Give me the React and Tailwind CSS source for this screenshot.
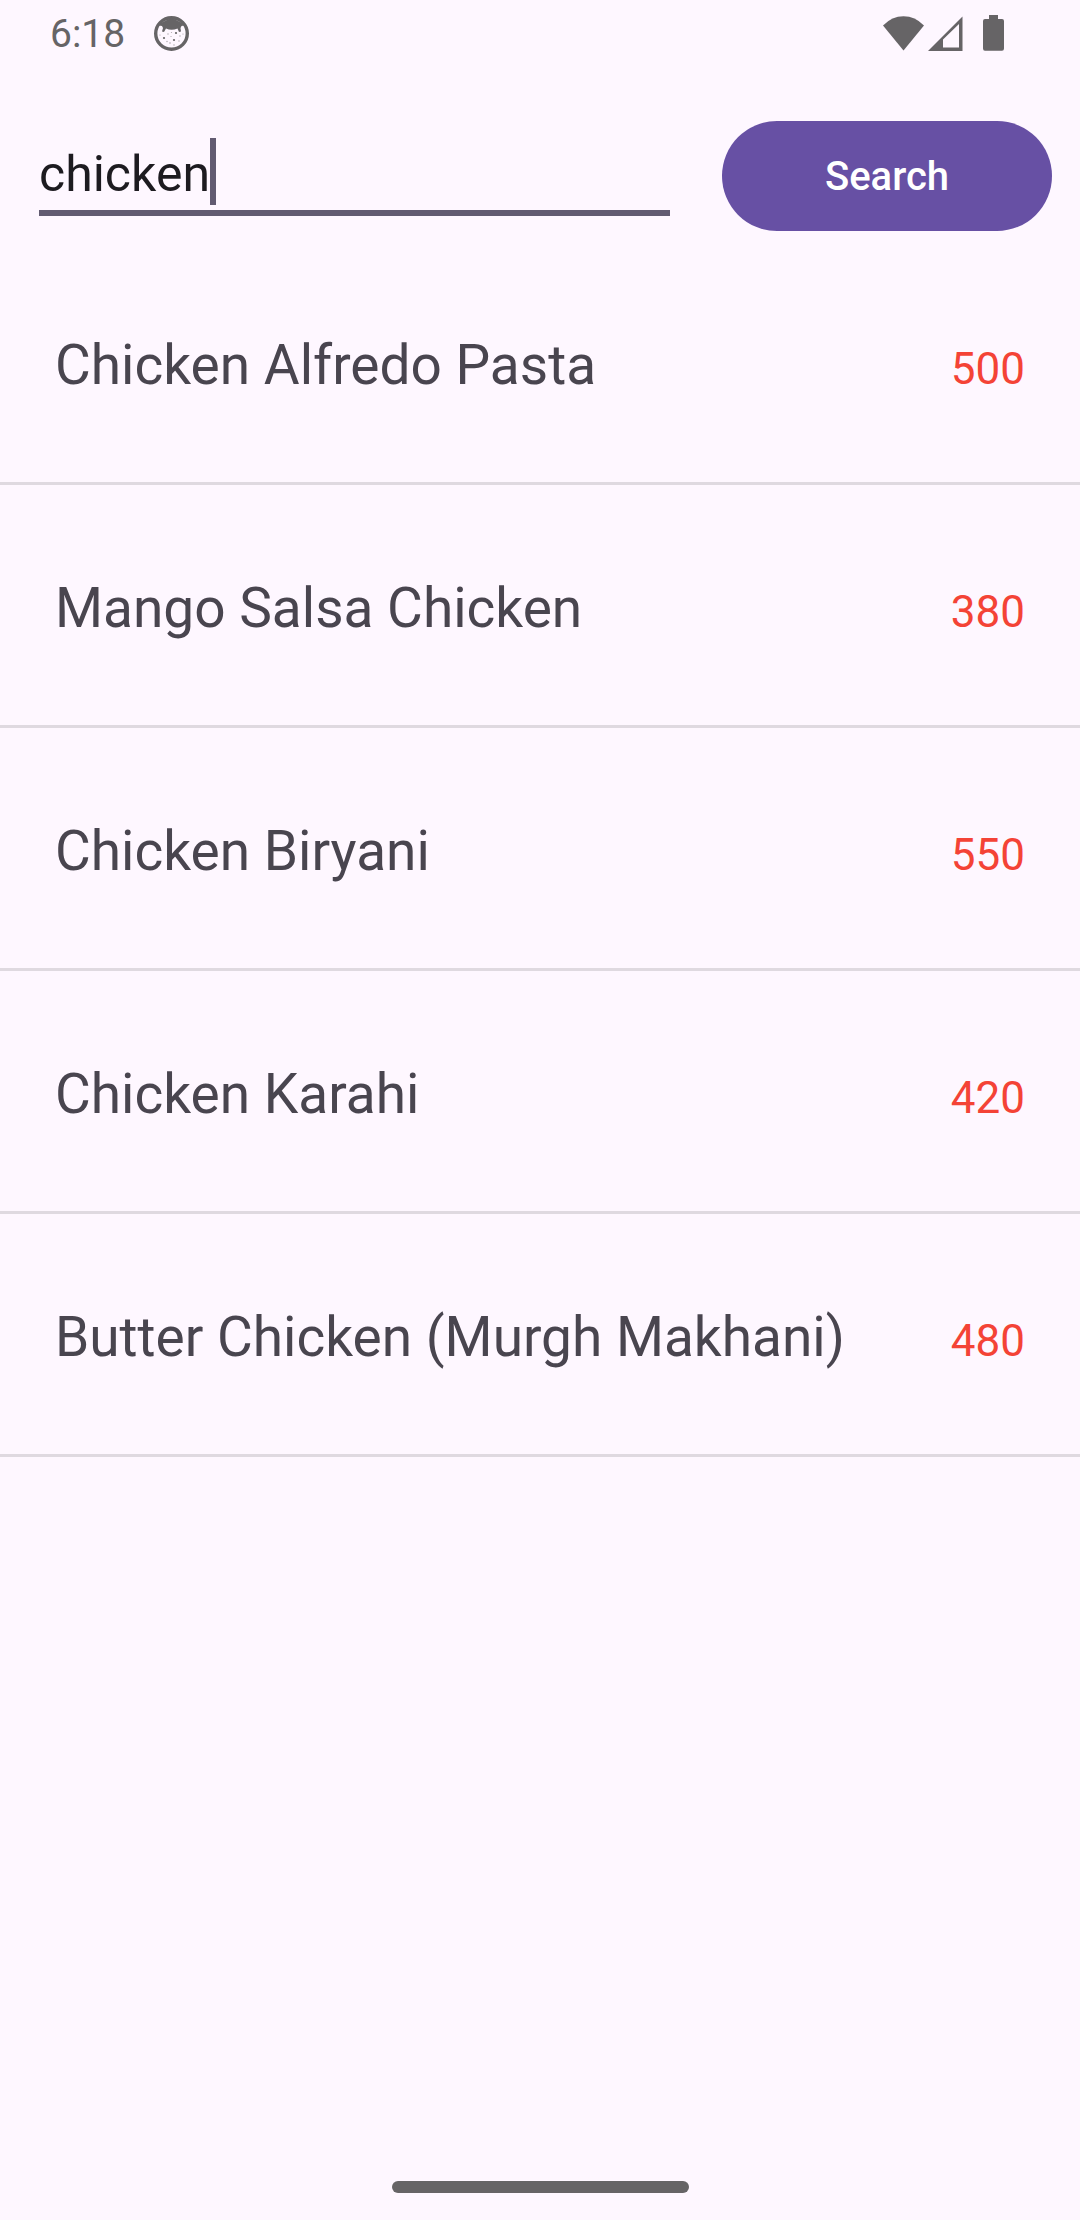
import { useState } from "react";

const recipes = [
  { name: "Chicken Alfredo Pasta", calories: 500 },
  { name: "Mango Salsa Chicken", calories: 380 },
  { name: "Chicken Biryani", calories: 550 },
  { name: "Chicken Karahi", calories: 420 },
  { name: "Butter Chicken (Murgh Makhani)", calories: 480 },
];

function FaceIcon() {
  return (
    <svg viewBox="0 0 35 35" className="size-[35px]" aria-hidden="true">
      <circle cx="17.5" cy="17.5" r="15.8" fill="none" stroke="currentColor" strokeWidth="3.4" />
      <path
        d="M7 7 L17.5 1.5 L28 7 L30 9.5 L27.5 10 L26.5 12 L27 15.5 L25 16 L23.5 12.5 Q17.5 15 12 12.5 L10 16 L8 15.5 L9 12 L8 10 L5 9.5 Z"
        fill="currentColor"
      />
      <g fill="currentColor">
        <circle cx="22" cy="17" r="1.1" />
        <circle cx="10" cy="22" r="1.1" />
        <circle cx="20" cy="24" r="1.1" />
        <g opacity="0.55">
          <circle cx="14" cy="18" r="0.7" />
          <circle cx="17.5" cy="16.5" r="0.6" />
          <circle cx="6" cy="19" r="0.6" />
          <circle cx="17" cy="20.5" r="0.6" />
          <circle cx="26" cy="20" r="0.7" />
          <circle cx="13" cy="25.5" r="0.7" />
          <circle cx="16" cy="27" r="0.8" />
          <circle cx="25" cy="25" r="0.7" />
          <circle cx="20" cy="29" r="0.7" />
          <circle cx="29" cy="18" r="0.6" />
        </g>
      </g>
    </svg>
  );
}

function WifiIcon() {
  return (
    <svg viewBox="0 0 41 35" className="h-[35px] w-[41px]" aria-hidden="true">
      <path d="M0 9.5 Q9 0.3 20.5 0.3 T41 9.5 L20.5 34.5 Z" fill="currentColor" />
    </svg>
  );
}

function SignalIcon() {
  return (
    <svg viewBox="0 0 35 35" className="size-[35px]" aria-hidden="true">
      <path d="M0 35 L34.5 0.5 V35 Z M15 23.5 V31.5 H31 V8 Z" fill="currentColor" fillRule="evenodd" />
    </svg>
  );
}

function BatteryIcon() {
  return (
    <svg viewBox="0 0 21 36" className="h-[36px] w-[21px]" aria-hidden="true">
      <path
        d="M6 0 H15 V4 H19 Q21 4 21 6 V33.5 Q21 35.7 19 35.7 H2 Q0 35.7 0 33.5 V6 Q0 4 2 4 H6 Z"
        fill="currentColor"
      />
    </svg>
  );
}

export default function App() {
  const [query, setQuery] = useState("chicken");

  return (
    <div className="flex min-h-screen flex-col bg-[#fef7ff] font-[Roboto,sans-serif]">
      <div className="flex h-[66px] items-center justify-between pr-[76px] pl-[50px] text-[#666466]">
        <div className="flex items-center gap-[29px]">
          <span className="pt-[2px] text-[39px] leading-[64px]">6:18</span>
          <FaceIcon />
        </div>
        <div className="flex items-center">
          <WifiIcon />
          <span className="ml-1">
            <SignalIcon />
          </span>
          <span className="ml-5">
            <BatteryIcon />
          </span>
        </div>
      </div>

      <form
        className="flex items-end gap-[52px] pt-[55px] pr-7 pb-[11px] pl-[39px]"
        onSubmit={(event) => event.preventDefault()}
      >
        <label className="mb-[15px] flex min-w-0 flex-1 items-center border-b-[6px] border-[#625b71] pb-[5px]">
          <input
            type="text"
            aria-label="Search recipes"
            value={query}
            onChange={(event) => setQuery(event.target.value)}
            className="field-sizing-content h-[67px] max-w-full bg-transparent pt-[5px] text-[50px] leading-[62px] text-[#1d1b20] caret-transparent outline-none"
          />
          <span className="h-[67px] w-[6px] shrink-0 bg-[#625b71]" aria-hidden="true" />
        </label>
        <button
          type="submit"
          className="h-[110px] w-[330px] shrink-0 rounded-full bg-[#6750a4] pt-[2px] text-[40px] font-medium text-white"
        >
          Search
        </button>
      </form>

      <ul className="flex-1">
        {recipes.map((recipe) => (
          <li
            key={recipe.name}
            className="flex items-baseline justify-between border-b-3 border-[#dfd9e0] px-[55px] pt-[91px] pb-[85px]"
          >
            <span className="text-[55px] leading-[64px] text-[#49454f]">{recipe.name}</span>
            <span className="text-[44px] leading-[52px] text-[#f44336]">{recipe.calories}</span>
          </li>
        ))}
      </ul>

      <div className="flex justify-center pb-[27px]">
        <div className="h-3 w-[297px] rounded-full bg-[#666466]" />
      </div>
    </div>
  );
}
